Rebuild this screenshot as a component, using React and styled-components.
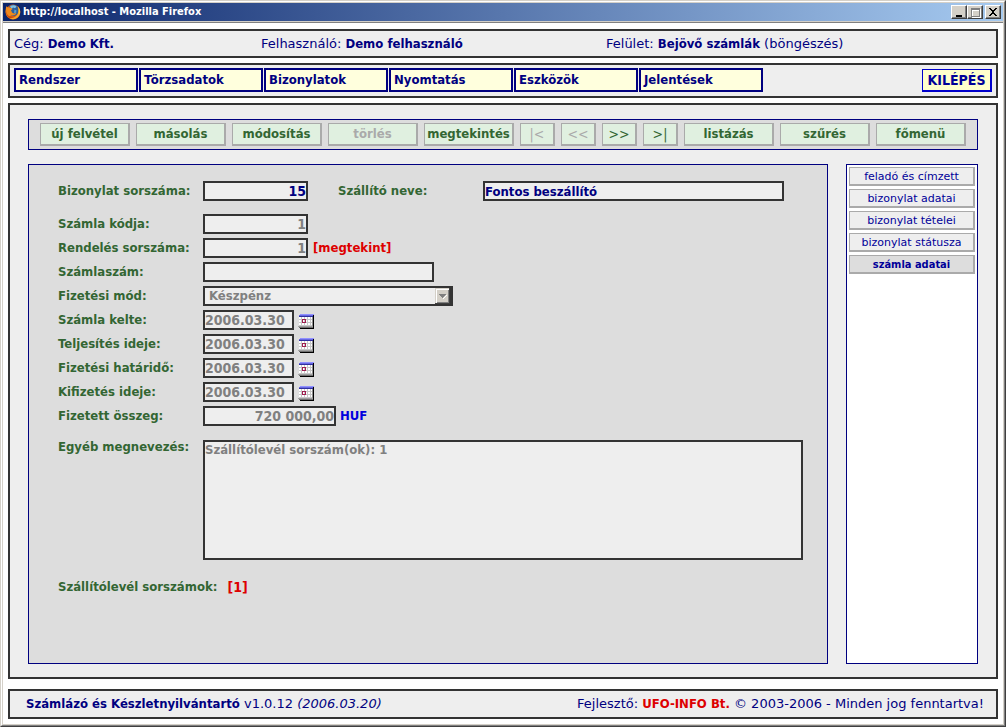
import React from "react";
import styled, { createGlobalStyle, css } from "styled-components";

const navy = "#000080";
const dark = "#333333";
const sans = '"DejaVu Sans", Verdana, sans-serif';
const condensed = '"DejaVu Sans Condensed", "DejaVu Sans", Verdana, sans-serif';

const GlobalStyle = createGlobalStyle`
  *, *::before, *::after { box-sizing: border-box; }
  body { margin: 0; background: #d4d0c8; }
  button, input, select, textarea { margin: 0; border-radius: 0; }
`;

/* ---------- window frame ---------- */

const WindowEdge = styled.div`
  border-style: solid;
  border-width: 1px;
  border-color: #d4d0c8 #404040 #404040 #d4d0c8;
  font: 13px/18px ${sans};
  color: ${navy};
`;

const WindowBevel = styled.div`
  border-style: solid;
  border-width: 1px;
  border-color: #ffffff #808080 #808080 #ffffff;
`;

const WindowFace = styled.div`
  border: 1px solid #d4d0c8;
  background: #ffffff;
`;

const TitleBar = styled.header`
  display: flex;
  align-items: center;
  height: 18px;
  padding: 0 2px;
  background: linear-gradient(to right, #0a246a, #a6caf0);
`;

const TitleText = styled.h1`
  flex: 1;
  margin: 0 0 0 2px;
  font: bold 11px/18px ${condensed};
  color: #ffffff;
  white-space: nowrap;
`;

const WindowButton = styled.button`
  display: flex;
  width: 16px;
  height: 14px;
  padding: 0;
  margin-left: ${(p) => (p.$apart ? "2px" : "0")};
  border-style: solid;
  border-width: 1px;
  border-color: #ffffff #404040 #404040 #ffffff;
  background: #d4d0c8;
  box-shadow: inset -1px -1px #808080;
`;

const Page = styled.div`
  padding: 6px 5px 5px;
  border-top: 1px solid #808080;
  box-shadow: 0 -1px #d4d0c8;
  margin-top: 1px;
`;

/* ---------- page bars ---------- */

const Panel = styled.div`
  border: 2px solid ${dark};
  background: #eeeeee;
`;

const InfoBar = styled(Panel)`
  display: grid;
  grid-template-columns: 247fr 345fr 390fr;
  align-items: center;
  height: 29px;
  padding-left: 4px;
  white-space: nowrap;
`;

const Strong = styled.b`
  font-family: ${condensed};
`;

const MenuBar = styled(Panel).attrs({ as: "nav" })`
  display: flex;
  gap: 1px;
  height: 35px;
  margin-top: 5px;
  padding: 3px 4px 4px;
`;

const MenuButton = styled.button`
  flex: 0 1 124px;
  height: 24px;
  padding: 0 3px;
  border: 2px solid ${navy};
  background: #ffffdd;
  color: ${navy};
  font: bold 13px/18px ${condensed};
  text-align: left;
`;

const ExitButton = styled.button`
  flex: 0 0 70px;
  height: 23px;
  margin: 1px 0 0 auto;
  padding: 0;
  border: solid #0000cc;
  border-width: 1px 2px 2px 1px;
  background: #ffffcc;
  color: #000099;
  font: bold 14px/18px ${condensed};
`;

const Main = styled(Panel).attrs({ as: "main" })`
  margin-top: 5px;
  padding: 14px 18px 13px;
`;

const Toolbar = styled.div`
  display: flex;
  gap: 6px;
  height: 31px;
  padding: 3px 11px;
  border: 1px solid ${navy};
  background: #dddddd;
`;

const greyEdge = css`
  border: solid #aaaaaa;
  border-width: 1px 2px 2px 1px;
`;

const ToolButton = styled.button`
  flex: 0 1 ${(p) => (p.$small ? "35px" : "90px")};
  height: 23px;
  padding: 0;
  ${greyEdge}
  background: #e0f0e0;
  color: #336633;
  font: ${(p) => (p.$small ? "normal 14px" : "bold 13px")}/18px ${condensed};
  white-space: nowrap;

  &:disabled {
    color: #aaaaaa;
  }
`;

const Columns = styled.div`
  display: grid;
  grid-template-columns: minmax(0, 1fr) 132px;
  gap: 18px;
  margin-top: 14px;
`;

/* ---------- form ---------- */

const Form = styled.form`
  min-height: 500px;
  padding: 16px 24px 16px 29px;
  border: 1px solid ${navy};
  background: #dddddd;
`;

const Row = styled.div`
  display: flex;
  align-items: ${(p) => (p.$top ? "flex-start" : "center")};
  min-height: 20px;
  margin-bottom: ${(p) => p.$after || 4}px;
`;

const Label = styled.label`
  flex: none;
  width: ${(p) => (p.$auto ? "auto" : "145px")};
  margin-left: ${(p) => (p.$second ? "30px" : "0")};
  color: #336633;
  font: bold 13px/14px ${condensed};
  white-space: nowrap;
`;

const fieldStyle = css`
  border: 2px solid ${dark};
  outline: 0;
  background: #eeeeee;
  color: ${(p) => (p.$active ? navy : "#808080")};
  font: bold ${(p) => (p.$figures ? "14px" : "13px")}/16px ${condensed};
`;

const Field = styled.input`
  ${fieldStyle}
  width: ${(p) => p.$width}px;
  height: 20px;
  padding: 0;
  text-align: ${(p) => (p.$right ? "right" : "left")};
`;

const Memo = styled.textarea`
  ${fieldStyle}
  display: block;
  flex: 0 1 600px;
  min-width: 0;
  height: 120px;
  padding: 0;
  resize: none;
`;

const SelectBox = styled.div`
  position: relative;
  width: 250px;
  height: 20px;
`;

const Select = styled.select`
  ${fieldStyle}
  display: block;
  width: 100%;
  height: 20px;
  padding: 0 20px 0 4px;
  border-right-width: 3px;
  appearance: none;
  opacity: 1;
`;

const SelectArrow = styled.svg`
  position: absolute;
  top: 2px;
  right: 3px;
  pointer-events: none;
`;

const RedLink = styled.a`
  margin-left: ${(p) => (p.$wide ? "10px" : "5px")};
  color: #dd0000;
  font: bold ${(p) => (p.$wide ? "14px" : "13px")}/14px ${condensed};
  text-decoration: none;
`;

const Currency = styled.span`
  margin-left: 4px;
  color: #0000dd;
  font: bold 13px/14px ${condensed};
`;

const CalendarButton = styled.button`
  display: flex;
  width: 16px;
  height: 16px;
  margin: 2px 0 0 4px;
  padding: 0;
  border: 0;
  background: none;
`;

/* ---------- side tabs ---------- */

const Side = styled.aside`
  display: flex;
  flex-direction: column;
  gap: 3px;
  padding: 2px;
  border: 1px solid ${navy};
  background: #ffffff;
`;

const SideButton = styled.button`
  height: 19px;
  padding: 2px 0 0;
  ${greyEdge}
  background: ${(p) => (p.$current ? "#dddddd" : "#eeeeee")};
  color: #000099;
  font: ${(p) => (p.$current ? `bold 11px/14px ${condensed}` : `11px/14px ${sans}`)};
  white-space: nowrap;
`;

const Footer = styled(Panel).attrs({ as: "footer" })`
  display: flex;
  align-items: center;
  justify-content: space-between;
  height: 30px;
  margin-top: 10px;
  padding: 0 12px 0 16px;
  white-space: nowrap;
`;

const Company = styled(Strong)`
  color: #dd0000;
`;

/* ---------- drawings ---------- */

function BrowserIcon() {
  return (
    <svg width="16" height="16" viewBox="0 0 16 16" aria-hidden="true">
      <circle cx="8" cy="8" r="7.4" fill="#d8590f" />
      <circle cx="8.4" cy="6.4" r="5.6" fill="#2b5f9e" />
      <path d="M5 2.4C7 .8 10 1 11.600 2.600L10 4.200 8 3.600 6.600 5z" fill="#7fc0e0" />
      <path d="M9.500 5.500l2 1-.5 2.200-2 .3z" fill="#5aa0cc" />
      <path d="M1.200 2.200L3 3.600C4 3 5 3.200 6 4L7.600 5 6 6.200 7 8.600C8.500 10 10 9.500 11.400 8.800 11 11 8.500 12 6 11.400L3 13.200C.6 11 .2 7.500.8 5z" fill="#f08a1c" />
      <path d="M12.500 2C15.500 4.500 16 9 14 12 12 15 8 16 4.500 14.400 9 14.400 12.500 12 13.200 8 13.500 5.500 13.200 4 12.500 2z" fill="#f5a52a" />
      <path d="M13.600 3.600C15.200 6 15 9 13.800 11 14.400 8 14.200 6 13.600 3.600z" fill="#ffe04a" />
      <path d="M1 6C1 10 3.500 13 7.500 13.400 4 14.800.4 11 1 6z" fill="#c23c0c" />
    </svg>
  );
}

function CalendarIcon() {
  return (
    <svg width="16" height="16" viewBox="0 0 16 16" shapeRendering="crispEdges" aria-hidden="true">
      <path d="M15 2h1v14H2v-1h13z" fill="#000000" />
      <path d="M1 3h14v10H1z" fill="#ffffff" />
      <path d="M2 1h14v1H2z" fill="#9090ff" />
      <path d="M1 2h14v1H1z" fill="#6868e0" />
      <path d="M1 3h14v1H1z" fill="#3030a0" />
      <path d="M1 6h13v1H1zM1 9h13v1H1zM1 12h13v1H1zM3 4h1v9H3zM6 4h1v9H6zM9 4h1v9H9zM12 4h1v9h-1z" fill="#c8c8c8" />
      <path d="M4 6h4v4H4zM5 7v2h2V7z" fill="#a02050" fillRule="evenodd" />
      <path d="M14 4h1v9h-1z" fill="#909090" />
      <path d="M0 13h15v1H0z" fill="#a0a0a0" />
      <path d="M1 14h14v1H1z" fill="#707070" />
    </svg>
  );
}

function ArrowIcon() {
  return (
    <SelectArrow width="15" height="16" viewBox="0 0 15 16" shapeRendering="crispEdges" aria-hidden="true">
      <path d="M0 0h15v16H0z" fill="#d4d0c8" />
      <path d="M1 1h13v1H2v13H1z" fill="#ffffff" />
      <path d="M13 2h1v13H2v-1h11z" fill="#808080" />
      <path d="M14 0h1v16H0v-1h14z" fill="#404040" />
      <path d="M11 7h1v1h-1v1h-1v1H9v1H8v-1h1V9h1V8h1z" fill="#ffffff" />
      <path d="M4 6h7v1h-1v1H9v1H8v1H7V9H6V8H5V7H4z" fill="#808080" />
    </SelectArrow>
  );
}

const windowGlyphs = {
  min: <path d="M4 9h6v2H4z" fill="#000000" />,
  max: (
    <>
      <path d="M4 3h9v9H4zM5 5v6h7V5z" fill="#ffffff" fillRule="evenodd" />
      <path d="M3 2h9v9H3zM4 4v6h7V4z" fill="#808080" fillRule="evenodd" />
    </>
  ),
  close: (
    <path
      d="M3 2h2v1h1v1h2V3h1V2h2v1h-1v1H9v1H8v2h1v1h1v1h1v1H9V9H8V8H6v1H5v1H3V9h1V8h1V7h1V5H5V4H4V3H3z"
      fill="#000000"
    />
  ),
};

function Glyph({ kind }) {
  return (
    <svg width="14" height="12" viewBox="0 0 14 12" shapeRendering="crispEdges" aria-hidden="true">
      {windowGlyphs[kind]}
    </svg>
  );
}

/* ---------- data ---------- */

const menus = ["Rendszer", "Törzsadatok", "Bizonylatok", "Nyomtatás", "Eszközök", "Jelentések"];

const tools = [
  { text: "új felvétel" },
  { text: "másolás" },
  { text: "módosítás" },
  { text: "törlés", off: true },
  { text: "megtekintés" },
  { text: "|<", off: true, small: true },
  { text: "<<", off: true, small: true },
  { text: ">>", small: true },
  { text: ">|", small: true },
  { text: "listázás" },
  { text: "szűrés" },
  { text: "főmenü" },
];

const dates = [
  { id: "issued", text: "Számla kelte:" },
  { id: "fulfilled", text: "Teljesítés ideje:" },
  { id: "due", text: "Fizetési határidő:" },
  { id: "paid", text: "Kifizetés ideje:" },
];

const tabs = ["feladó és címzett", "bizonylat adatai", "bizonylat tételei", "bizonylat státusza", "számla adatai"];

export default function App() {
  return (
    <WindowEdge>
      <GlobalStyle />
      <WindowBevel>
        <WindowFace>
          <TitleBar>
            <BrowserIcon />
            <TitleText>http://localhost - Mozilla Firefox</TitleText>
            <WindowButton aria-label="Minimize"><Glyph kind="min" /></WindowButton>
            <WindowButton aria-label="Maximize"><Glyph kind="max" /></WindowButton>
            <WindowButton aria-label="Close" $apart><Glyph kind="close" /></WindowButton>
          </TitleBar>
          <Page>
            <InfoBar>
              <span>Cég: <Strong>Demo Kft.</Strong></span>
              <span>Felhasználó: <Strong>Demo felhasználó</Strong></span>
              <span>Felület: <Strong>Bejövő számlák</Strong> (böngészés)</span>
            </InfoBar>
            <MenuBar>
              {menus.map((m) => <MenuButton key={m}>{m}</MenuButton>)}
              <ExitButton>KILÉPÉS</ExitButton>
            </MenuBar>
            <Main>
              <Toolbar>
                {tools.map((t) => (
                  <ToolButton key={t.text} disabled={t.off} $small={t.small}>{t.text}</ToolButton>
                ))}
              </Toolbar>
              <Columns>
                <Form onSubmit={(e) => e.preventDefault()}>
                  <Row $after={13}>
                    <Label htmlFor="doc">Bizonylat sorszáma:</Label>
                    <Field id="doc" $width={105} $right $figures $active readOnly value="15" />
                    <Label htmlFor="supplier" $second>Szállító neve:</Label>
                    <Field id="supplier" $width={301} $active readOnly value="Fontos beszállító" />
                  </Row>
                  <Row>
                    <Label htmlFor="code">Számla kódja:</Label>
                    <Field id="code" $width={105} $right $figures readOnly value="1" />
                  </Row>
                  <Row>
                    <Label htmlFor="order">Rendelés sorszáma:</Label>
                    <Field id="order" $width={105} $right $figures readOnly value="1" />
                    <RedLink href="#order">[megtekint]</RedLink>
                  </Row>
                  <Row>
                    <Label htmlFor="number">Számlaszám:</Label>
                    <Field id="number" $width={231} readOnly value="" />
                  </Row>
                  <Row>
                    <Label htmlFor="method">Fizetési mód:</Label>
                    <SelectBox>
                      <Select id="method" disabled defaultValue="Készpénz">
                        <option>Készpénz</option>
                      </Select>
                      <ArrowIcon />
                    </SelectBox>
                  </Row>
                  {dates.map((d) => (
                    <Row key={d.id}>
                      <Label htmlFor={d.id}>{d.text}</Label>
                      <Field id={d.id} $width={91} $figures readOnly value="2006.03.30" />
                      <CalendarButton type="button" aria-label={d.text}><CalendarIcon /></CalendarButton>
                    </Row>
                  ))}
                  <Row $after={14}>
                    <Label htmlFor="amount">Fizetett összeg:</Label>
                    <Field id="amount" $width={133} $right $figures readOnly value="720 000,00" />
                    <Currency>HUF</Currency>
                  </Row>
                  <Row $top $after={17}>
                    <Label htmlFor="memo">Egyéb megnevezés:</Label>
                    <Memo id="memo" readOnly value="Szállítólevél sorszám(ok): 1" />
                  </Row>
                  <Row>
                    <Label as="span" $auto>Szállítólevél sorszámok:</Label>
                    <RedLink href="#delivery" $wide>[1]</RedLink>
                  </Row>
                </Form>
                <Side>
                  {tabs.map((t) => (
                    <SideButton key={t} $current={t === "számla adatai"}>{t}</SideButton>
                  ))}
                </Side>
              </Columns>
            </Main>
            <Footer>
              <span><Strong>Számlázó és Készletnyilvántartó</Strong> v1.0.12 <i>(2006.03.20)</i></span>
              <span>Fejlesztő: <Company>UFO-INFO Bt.</Company> © 2003-2006 - Minden jog fenntartva!</span>
            </Footer>
          </Page>
        </WindowFace>
      </WindowBevel>
    </WindowEdge>
  );
}
